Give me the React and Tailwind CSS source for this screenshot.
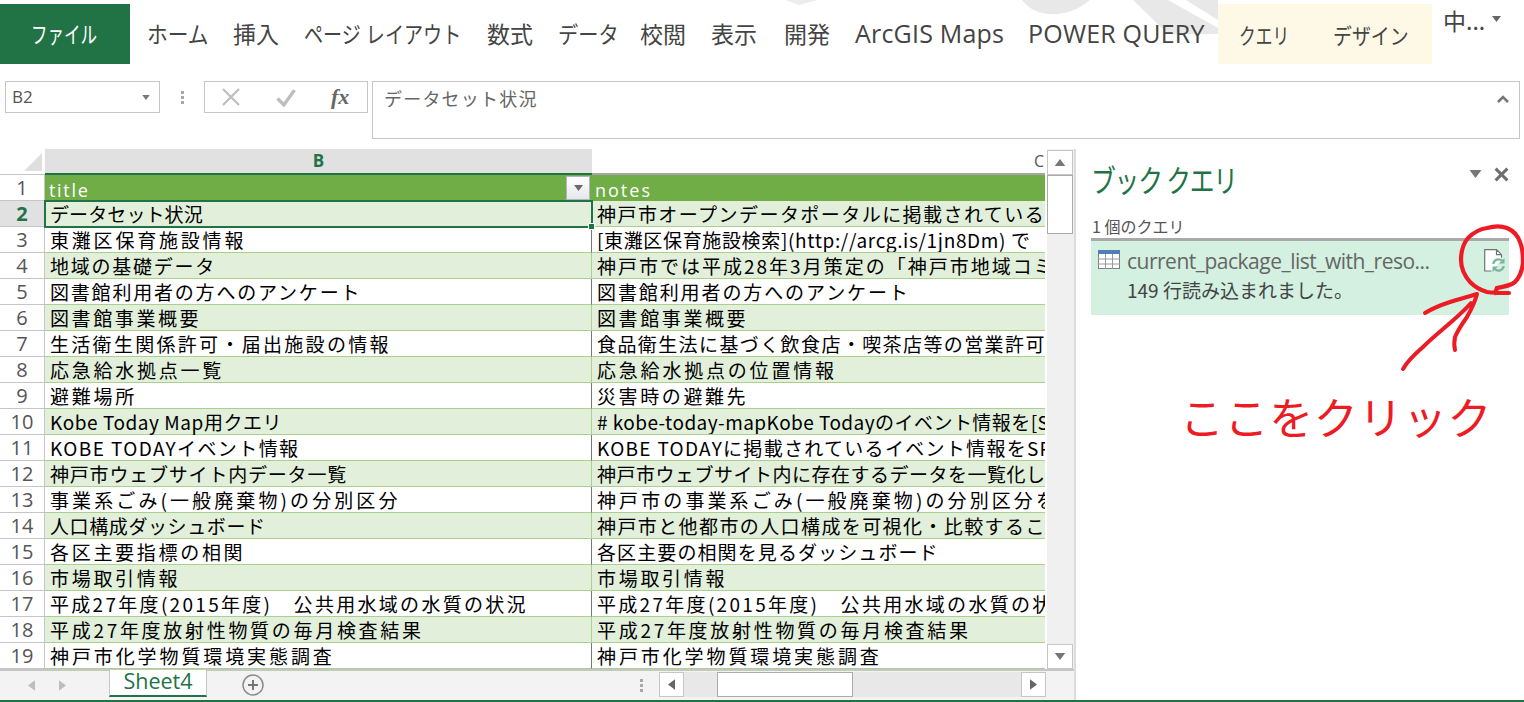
import React from "react";

const JP = '"Noto Sans CJK JP", sans-serif';
const UI = '"Open Sans", "Noto Sans CJK JP", sans-serif';

const rows = [
  ["データセット状況", "tracking-[0.1px]", "神戸市オープンデータポータルに掲載されているデータセット", "tracking-[1.45px]"],
  ["東灘区保育施設情報", "tracking-[2.8px]", "[東灘区保育施設検索](http://arcg.is/1jn8Dm) で", "tracking-[0.65px]"],
  ["地域の基礎データ", "tracking-[1.75px]", "神戸市では平成28年3月策定の「神戸市地域コミュニティ", "tracking-[2px]"],
  ["図書館利用者の方へのアンケート", "tracking-[1.8px]", "図書館利用者の方へのアンケート", "tracking-[1.9px]"],
  ["図書館事業概要", "tracking-[2.6px]", "図書館事業概要", "tracking-[2.6px]"],
  ["生活衛生関係許可・届出施設の情報", "tracking-[2.3px]", "食品衛生法に基づく飲食店・喫茶店等の営業許可施設", "tracking-[1.4px]"],
  ["応急給水拠点一覧", "tracking-[2.75px]", "応急給水拠点の位置情報", "tracking-[2.8px]"],
  ["避難場所", "tracking-[2.75px]", "災害時の避難先", "tracking-[2.6px]"],
  ["Kobe Today Map用クエリ", "tracking-[0.55px]", "# kobe-today-mapKobe Todayのイベント情報を[SPARQL", "tracking-[0.45px]"],
  ["KOBE TODAYイベント情報", "tracking-[1.4px]", "KOBE TODAYに掲載されているイベント情報をSPARQL", "tracking-[1.3px]"],
  ["神戸市ウェブサイト内データ一覧", "tracking-[0.8px]", "神戸市ウェブサイト内に存在するデータを一覧化した", "tracking-[0.5px]"],
  ["事業系ごみ(一般廃棄物)の分別区分", "tracking-[3.1px]", "神戸市の事業系ごみ(一般廃棄物)の分別区分を示す", "tracking-[3.1px]"],
  ["人口構成ダッシュボード", "tracking-[0.6px]", "神戸市と他都市の人口構成を可視化・比較することが", "tracking-[1.4px]"],
  ["各区主要指標の相関", "tracking-[2.7px]", "各区主要の相関を見るダッシュボード", "tracking-[1.1px]"],
  ["市場取引情報", "tracking-[2.7px]", "市場取引情報", "tracking-[2.7px]"],
  ["平成27年度(2015年度)　公共用水域の水質の状況", "tracking-[2.3px]", "平成27年度(2015年度)　公共用水域の水質の状況", "tracking-[2.3px]"],
  ["平成27年度放射性物質の毎月検査結果", "tracking-[2.7px]", "平成27年度放射性物質の毎月検査結果", "tracking-[2.7px]"],
  ["神戸市化学物質環境実態調査", "tracking-[2.9px]", "神戸市化学物質環境実態調査", "tracking-[2.9px]"],
];

const tabs = [
  ["ホーム", "w-[86px]", "text-[23px] scale-x-[0.9]"],
  ["挿入", "w-[71px]", "text-[23px]"],
  ["ページ レイアウト", "w-[183px]", "text-[23px] scale-x-[0.83]"],
  ["数式", "w-[71px]", "text-[23px]"],
  ["データ", "w-[82px]", "text-[23px] scale-x-[0.88]"],
  ["校閲", "w-[71px]", "text-[23px]"],
  ["表示", "w-[73px]", "text-[23px]"],
  ["開発", "w-[71px]", "text-[23px]"],
  ["ArcGIS Maps", "w-[173px]", "text-[25px] tracking-[0.2px]"],
  ["POWER QUERY", "w-[190px]", "text-[25px] tracking-[0.2px]"],
];

function Tri({ dir = "up", className = "" }) {
  const pts = { up: "0,8 6,0 12,8", down: "0,0 12,0 6,8", left: "8,0 8,12 0,6", right: "0,0 0,12 8,6" }[dir];
  const vb = dir === "left" || dir === "right" ? "0 0 8 12" : "0 0 12 8";
  return (
    <svg viewBox={vb} className={className}>
      <polygon points={pts} fill="currentColor" />
    </svg>
  );
}

function Row({ n, a, ca, b, cb }) {
  const active = n === 2;
  const alt = n % 2 === 0;
  return (
    <div className="flex h-[26px]">
      <div
        className={`w-[45px] shrink-0 flex items-center justify-center pt-[1px] text-[20px] border-b border-r border-[#c6c6c6] ${
          active ? "bg-[#e1e1e1] text-[#217346] font-bold" : "bg-white text-[#555555]"
        }`}
        style={{ fontFamily: UI }}
      >
        {n}
      </div>
      <div
        className={`relative w-[547px] shrink-0 pl-[5px] pt-[1px] flex items-center whitespace-nowrap text-[19px] text-black border-b border-r ${ca} ${
          alt ? "bg-[#e2efda] border-[#a9d08e]" : "bg-white border-b-[#a9d08e] border-r-[#777777]"
        } ${active ? "outline-2 -outline-offset-1 outline-[#217346] z-10" : ""}`}
      >
        <span>{a}</span>
        {active && <span className="absolute right-[-4px] bottom-[-4px] w-[7px] h-[7px] bg-[#217346] border border-white" />}
      </div>
      <div
        className={`w-[453px] shrink-0 pl-[5px] pt-[1px] flex items-center overflow-hidden whitespace-nowrap text-[19px] text-black border-b border-[#a9d08e] ${cb} ${
          alt ? "bg-[#e2efda]" : "bg-white"
        }`}
      >
        {b}
      </div>
    </div>
  );
}

function Grid() {
  return (
    <div className="w-[1045px] shrink-0" style={{ fontFamily: JP }}>
      <div className="flex h-[26px]">
        <div className="relative w-[45px] shrink-0 border-b border-[#c6c6c6]">
          <svg viewBox="0 0 18 18" className="absolute right-[3px] bottom-[3px] w-[18px] h-[18px]">
            <polygon points="18,0 18,18 0,18" fill="#dfdfdf" />
          </svg>
        </div>
        <div className="w-[547px] shrink-0 bg-[#e1e1e1] border-b-2 border-[#217346] flex items-center justify-center font-bold text-[#217346] text-[17px]" style={{ fontFamily: UI }}>
          B
        </div>
        <div className="w-[453px] shrink-0 border-b-2 border-[#a6a6a6] flex items-center justify-end pr-[1px] text-[#555555] text-[16px]" style={{ fontFamily: UI }}>
          C
        </div>
      </div>
      <div className="flex h-[26px]">
        <div className="w-[45px] shrink-0 flex items-center justify-center text-[20px] text-[#555555] border-b border-r border-[#c6c6c6]" style={{ fontFamily: UI }}>
          1
        </div>
        <div className="relative w-[547px] shrink-0 bg-[#70ad47] text-white text-[18px] tracking-[1.7px] pl-[4px] pt-[2px]" style={{ fontFamily: UI }}>
          title
          <span className="absolute right-[2px] top-[1px] w-[24px] h-[24px] bg-gradient-to-b from-white to-[#e4e8ee] border border-[#b5b5b5] flex items-center justify-center text-[#6a6a6a]">
            <Tri dir="down" className="w-[9px] h-[6px]" />
          </span>
        </div>
        <div className="w-[453px] shrink-0 bg-[#70ad47] text-white text-[18px] tracking-[2px] pl-[3px] pt-[2px]" style={{ fontFamily: UI }}>
          notes
        </div>
      </div>
      {rows.map((r, i) => (
        <Row key={i} n={i + 2} a={r[0]} ca={r[1]} b={r[2]} cb={r[3]} />
      ))}
    </div>
  );
}

function VScroll() {
  return (
    <div className="w-[26px] ml-[2px] shrink-0 flex flex-col bg-[#f0f0f0]">
      <div className="h-[25px] bg-white border border-[#c6c6c6] flex items-center justify-center text-[#777777] mt-[1px] shrink-0">
        <Tri dir="up" className="w-[12px] h-[7px]" />
      </div>
      <div className="h-[59px] bg-white border border-[#ababab] shrink-0" />
      <div className="flex-1" />
      <div className="h-[25px] bg-white border border-[#c6c6c6] flex items-center justify-center text-[#777777] shrink-0">
        <Tri dir="down" className="w-[12px] h-[7px]" />
      </div>
    </div>
  );
}

function SheetBar() {
  return (
    <div className="h-[31px] flex bg-[#f3f3f3] border-t-2 border-[#c6c6c6] items-start">
      <div className="w-[109px] h-full flex items-center shrink-0 pl-[28px] gap-[24px] text-[#bdbdbd]">
        <Tri dir="left" className="w-[7px] h-[11px]" />
        <Tri dir="right" className="w-[7px] h-[11px]" />
      </div>
      <div className="w-[98px] h-[27px] shrink-0 bg-white border-x border-[#c6c6c6] border-b-2 border-b-[#217346] flex items-center justify-center pb-[3px] text-[#217346] text-[21.5px] -mt-[1px]" style={{ fontFamily: UI }}>
        Sheet4
      </div>
      <div className="w-[92px] h-full shrink-0 flex items-center pl-[35px]">
        <svg viewBox="0 0 22 22" className="w-[22px] h-[22px] mt-[-1px]">
          <circle cx="11" cy="11" r="10" fill="none" stroke="#8a8a8a" strokeWidth="1.5" />
          <path d="M6 11h10M11 6v10" stroke="#777777" strokeWidth="2" />
        </svg>
      </div>
      <div className="w-[359px] h-full shrink-0 flex items-center justify-end pr-[15px]">
        <div className="flex flex-col gap-[2px]">
          <span className="w-[3px] h-[3px] bg-[#a8a8a8]" />
          <span className="w-[3px] h-[3px] bg-[#a8a8a8]" />
          <span className="w-[3px] h-[3px] bg-[#a8a8a8]" />
        </div>
      </div>
      <div className="mt-[1px] ml-[1px] w-[387px] h-[25px] shrink-0 flex bg-[#e8e8e8]">
        <div className="w-[25px] bg-white border border-[#c6c6c6] flex items-center justify-center text-[#666666]">
          <Tri dir="left" className="w-[7px] h-[11px]" />
        </div>
        <div className="w-[33px]" />
        <div className="w-[136px] bg-white border border-[#ababab]" />
        <div className="flex-1" />
        <div className="w-[25px] bg-white border border-[#c6c6c6] flex items-center justify-center text-[#666666]">
          <Tri dir="right" className="w-[7px] h-[11px]" />
        </div>
      </div>
    </div>
  );
}

function TaskPane() {
  return (
    <div className="flex-1 bg-white pl-[15px] pr-[15px]" style={{ fontFamily: JP }}>
      <div className="flex items-center h-[62px]">
        <span className="inline-block origin-left scale-x-[0.8] text-[#217346] text-[31px] leading-none mb-[3px] tracking-[-1.5px] whitespace-nowrap">ブック クエリ</span>
        <span className="flex-1" />
        <Tri dir="down" className="w-[13px] h-[8px] text-[#777777] mr-[12px] -mt-[12px]" />
        <svg viewBox="0 0 14 14" className="w-[15px] h-[15px] -mt-[12px]">
          <path d="M1.5 1.5l11 11M12.5 1.5l-11 11" stroke="#6f6f6f" strokeWidth="2.8" />
        </svg>
      </div>
      <div className="text-[16px] text-[#555555] h-[27px] leading-none flex items-center pt-[3px] ml-[1px]">1 個のクエリ</div>
      <div className="h-[77px] w-[418px] bg-[#d3f0e0] border-t-[3px] border-[#a9a9a9] flex pl-[7px] pr-[3px]">
        <svg viewBox="0 0 22 19" className="w-[22px] h-[19px] mt-[9px] shrink-0">
          <rect x="0.5" y="0.5" width="21" height="18" fill="#ffffff" stroke="#7f7f7f" />
          <rect x="0" y="0" width="22" height="4" fill="#4e7fb8" />
          <path d="M0 9h22M0 14h22M7.5 4v15M14.5 4v15" stroke="#9a9a9a" strokeWidth="1" />
        </svg>
        <div className="ml-[7px] flex-1 min-w-0">
          <div className="text-[21px] text-[#666666] leading-[30px] mt-[5px] tracking-[-0.5px] whitespace-nowrap" style={{ fontFamily: UI }}>
            current_package_list_with_reso...
          </div>
          <div className="text-[19px] text-[#444444] leading-[30px] -mt-[1px] whitespace-nowrap">149 行読み込まれました。</div>
        </div>
        <svg viewBox="0 0 22 23" className="w-[22px] h-[23px] mt-[8px] shrink-0">
          <path d="M0.7 0.7h11.8l5 5v5l-9 11H0.7z" fill="#ffffff" />
          <path d="M7.5 22H0.7V0.7h11.8l5 5v3M12.5 0.7v5h5" fill="none" stroke="#6f7572" strokeWidth="1.2" />
          <path d="M9.3 15a5.2 5.2 0 0 1 9-3M19.7 17a5.2 5.2 0 0 1-9 3" fill="none" stroke="#78b59d" strokeWidth="2.2" />
          <path d="M20.5 9v5.5H15zM8.5 23v-5.5H14z" fill="#78b59d" />
        </svg>
      </div>
    </div>
  );
}

export default function App() {
  return (
    <div className="relative w-[1524px] h-[702px] overflow-hidden bg-white flex flex-col" style={{ fontFamily: JP }}>
      {/* 背景透かし */}
      <svg viewBox="0 0 1524 64" className="absolute left-0 top-0 w-[1524px] h-[64px]">
        <path d="M1022 0c14 19 46 19 68 0zM1133 0l35 34 50 0 0-6-50-28zM1186 0l32 20 0-20z" fill="#e8e8e8" />
        <path d="M785 0l32 0-18 5z" fill="#ececec" />
      </svg>

      {/* リボン */}
      <div className="relative h-[64px] shrink-0 flex items-stretch pt-[4px]">
        <div className="w-[130px] bg-[#217346] text-white flex items-center justify-center pb-[1px]">
          <span className="inline-block text-[23px] scale-x-[0.72] whitespace-nowrap -ml-[2px]">ファイル</span>
        </div>
        <div className="flex ml-[17px]">
          {tabs.map(([t, w, c]) => (
            <div key={t} className={`${w} flex items-center text-[#444444] whitespace-nowrap`} style={{ fontFamily: UI }}>
              <span className={`inline-block origin-left ${c}`}>{t}</span>
            </div>
          ))}
        </div>
        <div className="w-[214px] bg-[#fef9e7] flex items-center text-[22px] text-[#444444]">
          <span className="w-[115px] pl-[21px]">
            <span className="inline-block origin-left scale-x-[0.76]">クエリ</span>
          </span>
          <span className="inline-block origin-left scale-x-[0.86]">デザイン</span>
        </div>
        <div className="ml-[11px] flex items-start text-[23px] leading-[32px] text-[#444444] whitespace-nowrap">
          中...
          <Tri dir="down" className="w-[9px] h-[6px] ml-[7px] mt-[12px] text-[#666666]" />
        </div>
      </div>

      {/* 数式バー */}
      <div className="h-[58px] mt-[17px] shrink-0 flex items-start">
        <div className="ml-[5px] w-[155px] h-[32px] border border-[#c6c6c6] flex items-center justify-between pl-[6px] pr-[9px] text-[17px] text-[#555555]" style={{ fontFamily: UI }}>
          B2
          <Tri dir="down" className="w-[8px] h-[5px] text-[#777777]" />
        </div>
        <div className="w-[44px] h-[32px] shrink-0 flex flex-col items-center justify-center gap-[2px]">
          <span className="w-[3px] h-[3px] bg-[#a8a8a8]" />
          <span className="w-[3px] h-[3px] bg-[#a8a8a8]" />
          <span className="w-[3px] h-[3px] bg-[#a8a8a8]" />
        </div>
        <div className="w-[164px] h-[32px] shrink-0 border border-[#c6c6c6] flex items-center">
          <svg viewBox="0 0 18 18" className="w-[18px] h-[18px] ml-[17px]">
            <path d="M1 1l16 16M17 1L1 17" stroke="#bdbdbd" strokeWidth="2.2" />
          </svg>
          <svg viewBox="0 0 20 18" className="w-[22px] h-[19px] ml-[35px]">
            <path d="M2 10l6 6L18 2" fill="none" stroke="#bdbdbd" strokeWidth="3.2" />
          </svg>
          <span className="ml-[34px] text-[22px] italic font-bold text-[#666666] leading-none" style={{ fontFamily: '"Liberation Serif", serif' }}>
            fx
          </span>
        </div>
        <div className="ml-[4px] w-[1148px] h-[58px] shrink-0 border border-[#c6c6c6] flex justify-between pl-[11px] pr-[10px] pt-[3px] text-[18px] text-[#666666] tracking-[1.2px]">
          データセット状況
          <svg viewBox="0 0 12 8" className="w-[12px] h-[8px] mt-[10px]">
            <path d="M1 7l5-5 5 5" fill="none" stroke="#777777" strokeWidth="2.6" />
          </svg>
        </div>
      </div>

      {/* 本体 */}
      <div className="mt-[10px] flex-1 flex min-h-0">
        <div className="w-[1076px] shrink-0 flex flex-col border-r-2 border-[#dcdcdc]">
          <div className="h-[520px] flex bg-white shrink-0 overflow-hidden">
            <Grid />
            <VScroll />
            <div className="w-[2px] bg-[#f0f0f0]" />
          </div>
          <SheetBar />
        </div>
        <TaskPane />
      </div>
      <div className="h-[2px] bg-[#217346] shrink-0" />

      {/* 手書きの注釈 */}
      <svg viewBox="0 0 1524 702" className="absolute left-0 top-0 w-[1524px] h-[702px] pointer-events-none z-20">
        <path
          d="M1509 293C1500 293 1494 293 1487 292C1480 290 1475 287 1470 282C1464 275 1461 268 1461 260C1461 251 1463 244 1468 238C1473 233 1480 229 1487 228C1494 226 1502 226 1507 228C1514 231 1518 236 1520 242C1523 249 1523 256 1523 263C1522 271 1520 277 1515 282C1510 286 1503 287 1497 288L1495 293"
          fill="none"
          stroke="#ed1c24"
          strokeWidth="4.2"
          strokeLinecap="round"
        />
        <path
          d="M1403 369C1408 360 1415 354 1423 347C1432 338 1441 331 1450 323C1458 316 1465 310 1471 303M1425 313C1433 308 1441 305 1450 302C1459 299 1468 297 1477 294C1475 302 1471 310 1467 317C1462 324 1458 330 1455 337C1454 342 1454 346 1455 350"
          fill="none"
          stroke="#ed1c24"
          strokeWidth="4"
          strokeLinecap="round"
          strokeLinejoin="round"
        />
      </svg>
      <div className="absolute left-[1180px] top-[386px] text-[44px] leading-[60px] text-[#ed1c24] tracking-[0.6px] whitespace-nowrap z-20">ここをクリック</div>
    </div>
  );
}
